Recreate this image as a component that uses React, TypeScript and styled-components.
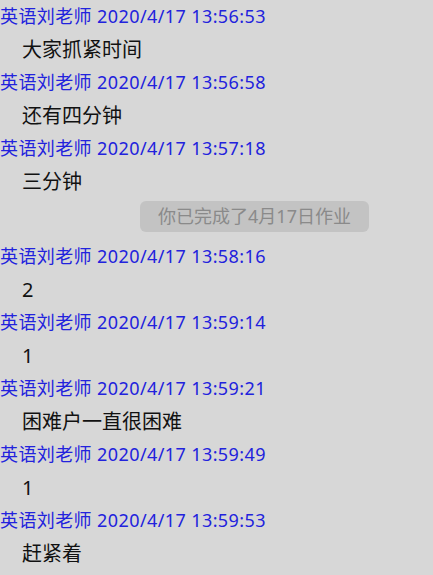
import React from 'react'
import styled, { createGlobalStyle } from 'styled-components'

const GlobalStyle = createGlobalStyle`
  html, body {
    margin: 0;
    padding: 0;
    background: #d7d7d7;
  }
  body {
    font-family: "Noto Sans", "Noto Sans CJK SC", sans-serif;
  }
`

type Item =
  | { kind: 'msg'; time: string; text: string }
  | { kind: 'notice'; text: string }

const items: Item[] = [
  { kind: 'msg', time: '2020/4/17 13:56:53', text: '大家抓紧时间' },
  { kind: 'msg', time: '2020/4/17 13:56:58', text: '还有四分钟' },
  { kind: 'msg', time: '2020/4/17 13:57:18', text: '三分钟' },
  { kind: 'notice', text: '你已完成了4月17日作业' },
  { kind: 'msg', time: '2020/4/17 13:58:16', text: '2' },
  { kind: 'msg', time: '2020/4/17 13:59:14', text: '1' },
  { kind: 'msg', time: '2020/4/17 13:59:21', text: '困难户一直很困难' },
  { kind: 'msg', time: '2020/4/17 13:59:49', text: '1' },
  { kind: 'msg', time: '2020/4/17 13:59:53', text: '赶紧着' },
]

const Feed = styled.div`
  display: flex;
  flex-direction: column;
  width: 433px;
  height: 575px;
  overflow: hidden;
`

const Message = styled.div`
  display: flex;
  flex-direction: column;
`

const Header = styled.div`
  height: 33px;
  line-height: 33px;
  font-size: 18px;
  letter-spacing: 0.4px;
  color: #2222dd;
  white-space: nowrap;
`

const Body = styled.div`
  height: 33px;
  line-height: 33px;
  padding-left: 22px;
  font-size: 20px;
  color: #111;
`

const Notice = styled.div`
  align-self: flex-start;
  width: 229px;
  height: 31px;
  line-height: 31px;
  margin: 3px 0 8px 140px;
  border-radius: 6px;
  background: #c3c3c3;
  color: #8a8a8a;
  font-size: 18px;
  text-align: center;
`

export default function App () {
  return (
    <>
      <GlobalStyle />
      <Feed>
        {items.map((item, i) => item.kind === 'notice'
          ? <Notice key={i}>{item.text}</Notice>
          : (
            <Message key={i}>
              <Header>英语刘老师 {item.time}</Header>
              <Body>{item.text}</Body>
            </Message>
          ))}
      </Feed>
    </>
  )
}
